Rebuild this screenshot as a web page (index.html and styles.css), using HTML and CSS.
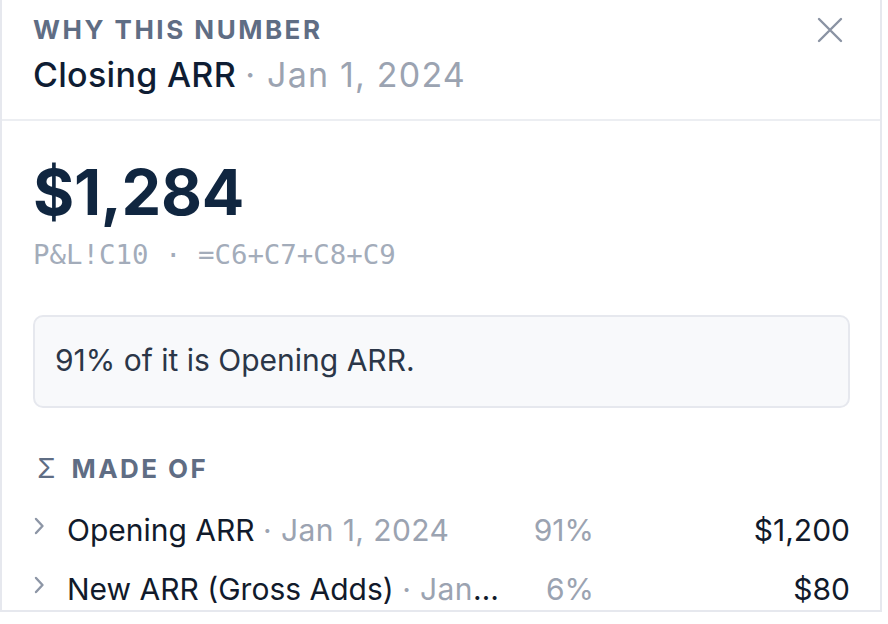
FILE: index.html
```html
<!DOCTYPE html>
<html>
<head>
<meta charset="utf-8">
<link rel="stylesheet" href="styles.css">
</head>
<body>
<div class="panel">
  <header class="head">
    <div class="head-text">
      <div class="eyebrow">WHY THIS NUMBER</div>
      <div class="title">Closing ARR <span class="muted">· Jan 1, 2024</span></div>
    </div>
    <button class="close" aria-label="Close">
      <svg width="26" height="26" viewBox="0 0 26 26"><path d="M2 2L24 24M24 2L2 24" stroke="#8a93a3" stroke-width="2.4" stroke-linecap="round" fill="none"/></svg>
    </button>
  </header>
  <section class="body">
    <div class="value">$1,284</div>
    <div class="ref">P&amp;L!C10 · =C6+C7+C8+C9</div>
    <div class="callout">91% of it is Opening ARR.</div>
    <div class="section-label"><span class="sigma">Σ</span>MADE OF</div>
    <ul class="rows">
      <li class="row">
        <svg class="chev" width="12" height="18" viewBox="0 0 12 18"><path d="M3 2L9.5 9L3 16" stroke="#8d96a6" stroke-width="2.4" fill="none" stroke-linecap="round" stroke-linejoin="round"/></svg>
        <span class="name">Opening ARR <span class="muted">· Jan 1, 2024</span></span>
        <span class="pct">91%</span>
        <span class="amt">$1,200</span>
      </li>
      <li class="row">
        <svg class="chev" width="12" height="18" viewBox="0 0 12 18"><path d="M3 2L9.5 9L3 16" stroke="#8d96a6" stroke-width="2.4" fill="none" stroke-linecap="round" stroke-linejoin="round"/></svg>
        <span class="name">New ARR (Gross Adds) <span class="muted">· Jan 1, 2024</span></span>
        <span class="pct">6%</span>
        <span class="amt">$80</span>
      </li>
    </ul>
  </section>
</div>
</body>
</html>
```
FILE: styles.css
```css
* { box-sizing: border-box; }
html, body { margin: 0; padding: 0; background: #ffffff; }
body { font-family: Inter, "Noto Sans", sans-serif; color: #0f1d33; }

.panel {
  width: 882px;
  height: 612px;
  border-left: 2px solid #e6e8ee;
  border-right: 2px solid #e6e8ee;
  border-bottom: 2px solid #e6e8ee;
  overflow: hidden;
  background: #fff;
}

.head {
  display: flex;
  justify-content: space-between;
  align-items: flex-start;
  padding: 14px 32px 0 31px;
  height: 121px;
  border-bottom: 2px solid #eceef2;
}
.eyebrow {
  font-size: 26px;
  font-weight: 700;
  letter-spacing: 2.5px;
  color: #5f6d84;
  line-height: 32px;
}
.title {
  margin-top: 8px;
  font-size: 34px;
  font-weight: 500;
  line-height: 42px;
  letter-spacing: 0.3px;
  color: #0f1d33;
}
.title .muted { letter-spacing: 1.2px; }
.muted { color: #9ba3b1; font-weight: 400; }
.close {
  border: 0;
  background: none;
  padding: 0;
  margin-top: 3px;
  margin-right: 5px;
  width: 26px;
  height: 26px;
  cursor: pointer;
}

.body { padding: 31px 30px 0 31px; }
.value {
  font-size: 63px;
  font-weight: 700;
  line-height: 80px;
  color: #102640;
  letter-spacing: -0.3px;
}
.ref {
  font-family: "DejaVu Sans Mono", "Liberation Mono", monospace;
  font-size: 27.4px;
  line-height: 36px;
  color: #a3acba;
  margin-top: 5px;
}
.callout {
  margin-top: 42px;
  height: 93px;
  border: 2px solid #e6e8ee;
  border-radius: 10px;
  background: #f8f9fb;
  padding: 0 20px 4px 20px;
  display: flex;
  align-items: center;
  font-size: 30px;
  color: #2b3648;
}
.section-label {
  margin-top: 45px;
  font-size: 26px;
  font-weight: 700;
  letter-spacing: 2.4px;
  color: #5f6d84;
  line-height: 32px;
  display: flex;
  align-items: center;
}
.sigma { font-weight: 400; margin-left: 4px; margin-right: 16px; font-size: 27px; letter-spacing: 0; }
.rows { list-style: none; margin: 15px 0 0 0; padding: 0; }
.row {
  display: flex;
  align-items: center;
  height: 59px;
  font-size: 30px;
  color: #111a2b;
}
.row .muted { letter-spacing: 0.4px; }
.chev { flex: none; margin-right: 22px; margin-top: -8px; }
.name {
  flex: 1;
  min-width: 0;
  white-space: nowrap;
  overflow: hidden;
  text-overflow: ellipsis;
}
.pct { width: 90px; text-align: right; color: #9ba3b1; flex: none; }
.amt { width: 256px; text-align: right; flex: none; }
```
